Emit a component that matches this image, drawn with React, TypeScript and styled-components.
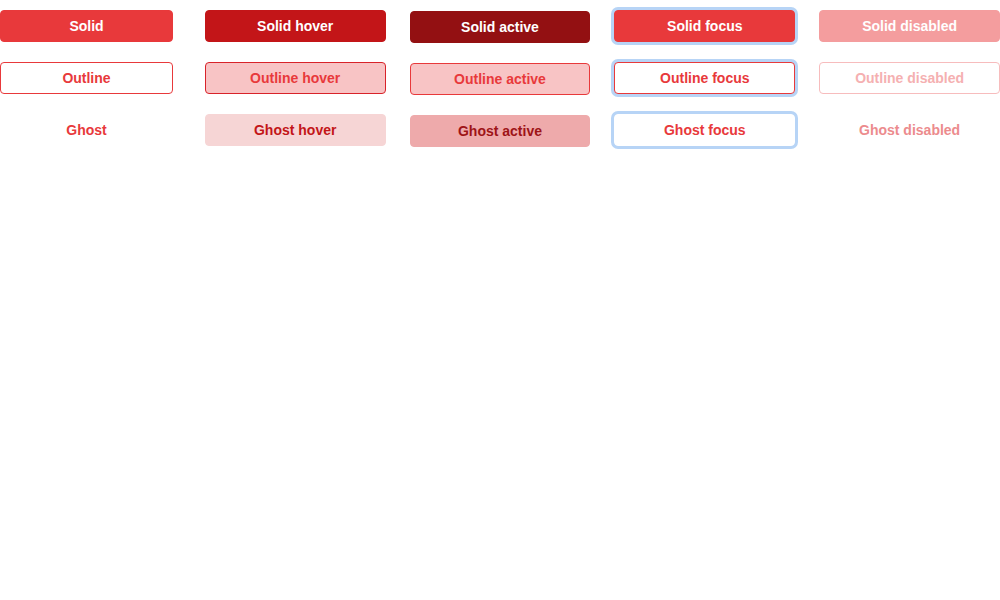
import React from "react";
import styled, { createGlobalStyle, css } from "styled-components";

const Global = createGlobalStyle`
  html, body { margin: 0; padding: 0; background: #ffffff; }
  body { font-family: "Liberation Sans", Arial, sans-serif; min-height: 600px; }
`;

type Variant = "solid" | "outline" | "ghost";
type State = "default" | "hover" | "active" | "focus" | "disabled";

const RED = "#e8393b";
const RED_HOVER = "#c31518";
const RED_ACTIVE = "#931012";
const RING_COLOR = "#b7d4f6";
const RING = `0 0 0 3px ${RING_COLOR}`;

const variantStyles: Record<Variant, Record<State, ReturnType<typeof css>>> = {
  solid: {
    default: css`background: ${RED}; color: #fff; border-color: ${RED};`,
    hover: css`background: ${RED_HOVER}; color: #fff; border-color: ${RED_HOVER};`,
    active: css`background: ${RED_ACTIVE}; color: #fff; border-color: ${RED_ACTIVE}; transform: translateY(1px);`,
    focus: css`background: ${RED}; color: #fff; border-color: ${RED}; box-shadow: ${RING};`,
    disabled: css`background: #f49d9e; color: #fff; border-color: #f49d9e;`,
  },
  outline: {
    default: css`background: #fff; color: ${RED}; border-color: ${RED};`,
    hover: css`background: #f8c4c5; color: ${RED}; border-color: #d8232a;`,
    active: css`background: #f8c4c5; color: ${RED}; border-color: ${RED}; transform: translateY(1px);`,
    focus: css`background: #fff; color: ${RED}; border-color: ${RED}; box-shadow: ${RING};`,
    disabled: css`background: #fff; color: #f5b0b1; border-color: #f7bcbd;`,
  },
  ghost: {
    default: css`background: transparent; color: ${RED}; border-color: transparent;`,
    hover: css`background: #f6d5d5; color: ${RED_HOVER}; border-color: #f6d5d5;`,
    active: css`background: #eeaaab; color: #9e1417; border-color: #eeaaab; transform: translateY(1px);`,
    focus: css`background: #fff; color: ${RED}; border-color: #fff; box-shadow: ${RING};`,
    disabled: css`background: transparent; color: #ec8b8d; border-color: transparent;`,
  },
};

const Grid = styled.div`
  display: grid;
  grid-template-columns: repeat(5, 1fr);
  column-gap: 24px;
  padding: 10px 0 20px;
  width: 1000px;
`;

const Column = styled.div<{ $narrow?: boolean }>`
  display: flex;
  flex-direction: column;
  align-items: flex-start;
  gap: 20px;
  & > button {
    width: ${(p) => (p.$narrow ? "173px" : "100%")};
  }
`;

const Button = styled.button<{ $variant: Variant; $state: State }>`
  box-sizing: border-box;
  height: 32px;
  padding: 0 12px;
  border: 1px solid transparent;
  border-radius: 4px;
  font-family: "Liberation Sans", Arial, sans-serif;
  font-size: 14px;
  font-weight: 700;
  line-height: 30px;
  text-align: center;
  cursor: pointer;
  outline: none;
  ${(p) => variantStyles[p.$variant][p.$state]}
`;

const states: State[] = ["default", "hover", "active", "focus", "disabled"];
const variants: Variant[] = ["solid", "outline", "ghost"];

const label = (v: Variant, s: State) => {
  const name = v.charAt(0).toUpperCase() + v.slice(1);
  return s === "default" ? name : `${name} ${s}`;
};

export default function App() {
  return (
    <>
      <Global />
      <Grid>
        {states.map((s, i) => (
          <Column key={s} $narrow={i === 0}>
            {variants.map((v) => (
              <Button key={v} $variant={v} $state={s} disabled={s === "disabled"}>
                {label(v, s)}
              </Button>
            ))}
          </Column>
        ))}
      </Grid>
    </>
  );
}
